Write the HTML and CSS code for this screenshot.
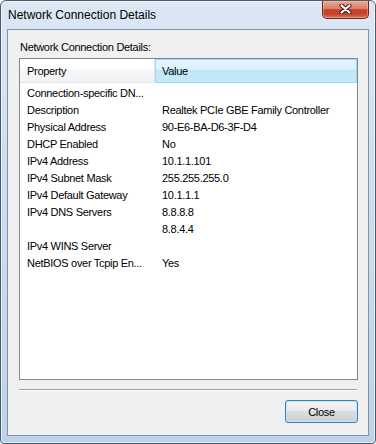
FILE: index.html
```html
<!DOCTYPE html>
<html lang="en">
<head>
  <meta charset="UTF-8">
  <title>Network Connection Details</title>
  <meta name="viewport" content="width=device-width, initial-scale=1.0">
  <link rel="stylesheet" href="styles.css">
</head>
<body>
  <div class="window">
    <!-- Title bar -->
    <div class="titlebar">
      <span class="title">Network Connection Details</span>
      <button class="close-x" aria-label="Close">
        <svg width="13" height="10" viewBox="0 0 13 10">
          <path d="M2.5 1.5 L10.5 8.5 M10.5 1.5 L2.5 8.5" stroke="#4e1a13" stroke-width="4.2" stroke-linecap="round" fill="none"/>
          <path d="M2.5 1.5 L10.5 8.5 M10.5 1.5 L2.5 8.5" stroke="#ffffff" stroke-width="2.2" stroke-linecap="round" fill="none"/>
        </svg>
      </button>
    </div>

    <div class="client">
      <div class="label">Network Connection Details:</div>
      <div class="listview">
        <div class="lv-head">
          <div class="lv-col prop">Property</div>
          <div class="lv-col val">Value</div>
        </div>
        <div class="lv-rows">
          <div class="lv-row"><span>Connection-specific DN...</span><span></span></div>
          <div class="lv-row"><span>Description</span><span>Realtek PCIe GBE Family Controller</span></div>
          <div class="lv-row"><span>Physical Address</span><span>90-E6-BA-D6-3F-D4</span></div>
          <div class="lv-row"><span>DHCP Enabled</span><span>No</span></div>
          <div class="lv-row"><span>IPv4 Address</span><span>10.1.1.101</span></div>
          <div class="lv-row"><span>IPv4 Subnet Mask</span><span>255.255.255.0</span></div>
          <div class="lv-row"><span>IPv4 Default Gateway</span><span>10.1.1.1</span></div>
          <div class="lv-row"><span>IPv4 DNS Servers</span><span>8.8.8.8</span></div>
          <div class="lv-row"><span></span><span>8.8.4.4</span></div>
          <div class="lv-row"><span>IPv4 WINS Server</span><span></span></div>
          <div class="lv-row"><span>NetBIOS over Tcpip En...</span><span>Yes</span></div>
        </div>
      </div>
      <div class="sep"></div>
      <div class="actions">
        <button class="btn">Close</button>
      </div>
    </div>
  </div>
</body>
</html>
```

FILE: styles.css
```css
* {
  box-sizing: border-box;
}
html, body {
  margin: 0;
  padding: 0;
  background: #ffffff;
}
body {
  font-family: "Liberation Sans", Arial, sans-serif;
  color: #000;
}
/* Окно в стиле Aero */
.window {
  width: 376px;
  height: 444px;
  border: 1px solid #505a66;
  border-radius: 6px 6px 4px 4px;
  background: linear-gradient(#dce7f4, #cddef0 40%, #bcd3eb);
  box-shadow: inset 0 0 0 1px rgba(255,255,255,0.55);
  display: flex;
  flex-direction: column;
  overflow: hidden;
}
.titlebar {
  height: 28px;
  flex-shrink: 0;
  display: flex;
  align-items: flex-start;
}
.title {
  flex: 1;
  font-size: 12px;
  line-height: 29px;
  padding-left: 7px;
  color: #000;
}
.close-x {
  width: 47px;
  height: 18px;
  margin: 0 6px 0 0;
  padding: 0;
  border: 1px solid #6b2a20;
  border-top: none;
  border-radius: 0 0 5px 5px;
  background: linear-gradient(#eaa897, #dc7b66 45%, #c23f29 52%, #c9472f 80%, #de7a5f);
  box-shadow: inset 0 0 0 1px rgba(255,220,210,0.35);
  display: flex;
  align-items: center;
  justify-content: center;
}
.close-x svg {
  display: block;
  margin-top: -1px;
}
/* Клиентская область */
.client {
  flex: 1;
  margin: 0 6px 7px 6px;
  border: 1px solid #8091a8;
  background: #f0f0f0;
  padding: 10px 10px 0 11px;
  display: flex;
  flex-direction: column;
  font-size: 11px;
  letter-spacing: -0.3px;
}
.label {
  line-height: 15px;
  padding-left: 1px;
  margin-bottom: 3px;
}
.listview {
  height: 322px;
  border: 1px solid #828790;
  background: #ffffff;
}
.lv-head {
  display: flex;
  height: 24px;
}
.prop {
  width: 135px;
  padding-left: 7px;
  border-bottom: 1px solid #e3e5e9;
  border-right: 1px solid #e3e5e9;
  background: linear-gradient(#ffffff, #ffffff 45%, #f6f7f9 46%, #f1f2f4);
  line-height: 24px;
}
.val {
  flex: 1;
  padding-left: 6px;
  line-height: 23px;
  border: 1px solid #96d9f9;
  background: linear-gradient(#e4f5fd, #d9f1fc 45%, #bfe6f8 46%, #c5e9f9);
}
.lv-rows {
  padding-top: 2px;
}
.lv-row {
  display: grid;
  grid-template-columns: 135px 1fr;
  height: 17px;
  line-height: 17px;
}
.lv-row span {
  padding-left: 7px;
  white-space: nowrap;
  overflow: hidden;
}
.sep {
  margin-top: 9px;
  margin-right: 1px;
  height: 2px;
  border-top: 1px solid #a0a0a0;
  border-bottom: 1px solid #ffffff;
}
.actions {
  display: flex;
  justify-content: flex-end;
  margin-top: 9px;
}
.btn {
  width: 73px;
  height: 23px;
  padding: 0;
  border: 1px solid #3c7fb1;
  border-radius: 3px;
  background: linear-gradient(#f3f3f3, #ebebeb 45%, #dddddd 50%, #cfcfcf);
  box-shadow: inset 0 0 0 1px #bfe6fa;
  font-family: "Liberation Sans", Arial, sans-serif;
  font-size: 11px;
  letter-spacing: -0.3px;
  color: #000;
}
```
